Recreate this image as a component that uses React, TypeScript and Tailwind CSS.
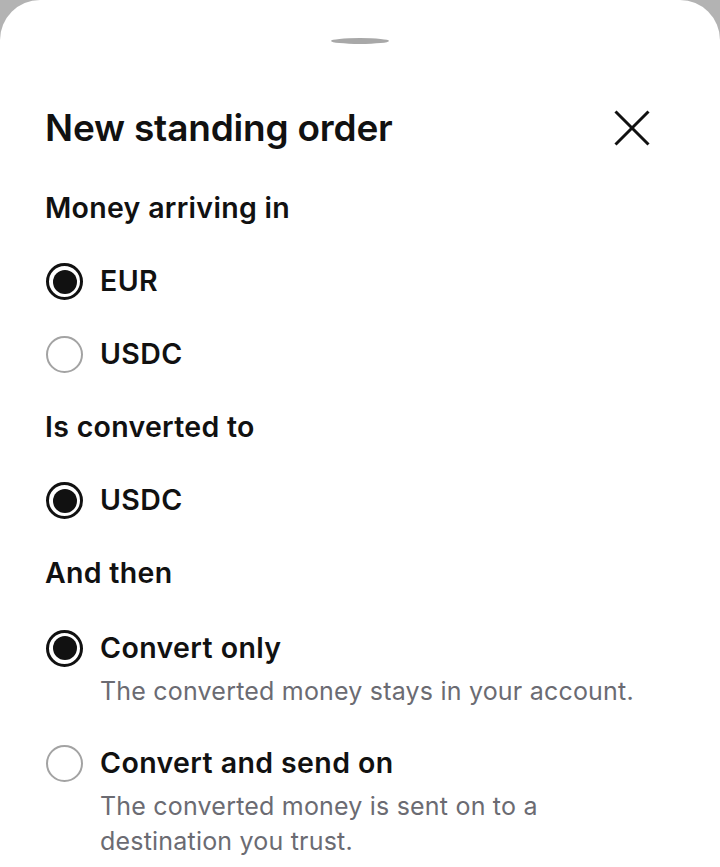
import React from 'react';

type Option = { label: string; description?: string; selected: boolean };

const sections: { title: string; options: Option[] }[] = [
  {
    title: 'Money arriving in',
    options: [
      { label: 'EUR', selected: true },
      { label: 'USDC', selected: false },
    ],
  },
  {
    title: 'Is converted to',
    options: [{ label: 'USDC', selected: true }],
  },
  {
    title: 'And then',
    options: [
      { label: 'Convert only', description: 'The converted money stays in your account.', selected: true },
      {
        label: 'Convert and send on',
        description: 'The converted money is sent on to a destination you trust.',
        selected: false,
      },
    ],
  },
];

function Radio({ selected }: { selected: boolean }) {
  if (selected) {
    return (
      <span className="flex h-[37px] w-[37px] shrink-0 items-center justify-center rounded-full border-[3px] border-[#111111]">
        <span className="h-[24px] w-[24px] rounded-full bg-[#111111]" />
      </span>
    );
  }
  return <span className="h-[37px] w-[37px] shrink-0 rounded-full border-2 border-[#a3a3a3]" />;
}

function OptionRow({ option }: { option: Option }) {
  if (!option.description) {
    return (
      <div className="flex h-[73px] items-center gap-[17px] pl-[1px]">
        <Radio selected={option.selected} />
        <span className="text-[28.5px] font-semibold tracking-[0.4px] text-[#111111]">{option.label}</span>
      </div>
    );
  }
  return (
    <div className="py-[16px]">
      <div className="flex h-[44px] items-center gap-[17px] pl-[1px]">
        <Radio selected={option.selected} />
        <span className="text-[28.5px] font-semibold tracking-[0.4px] text-[#111111]">{option.label}</span>
      </div>
      <p className="mt-[4px] pl-[55px] pr-[25px] text-[25px] leading-[35px] tracking-[0.2px] text-[#6b6b72]">
        {option.description}
      </p>
    </div>
  );
}

export default function App() {
  return (
    <div className="min-h-screen bg-[#b3b3b3]" style={{ fontFamily: 'Inter, "Noto Sans", sans-serif' }}>
      <div className="min-h-[867px] rounded-t-[40px] bg-white px-[45px] pt-[38px]">
        <div className="mx-auto h-[6px] w-[58px] rounded-[50%] bg-[#a8a8a8]" />

        <div className="mt-[56px] flex h-[56px] items-center justify-between">
          <h1 className="text-[37px] font-semibold tracking-[-0.2px] text-[#111111]">New standing order</h1>
          <button className="mr-[25px] flex h-[36px] w-[36px] items-center justify-center" aria-label="Close">
            <svg width="36" height="36" viewBox="0 0 36 36" fill="none" stroke="#111111" strokeWidth="3">
              <line x1="1.5" y1="1.5" x2="34.5" y2="34.5" />
              <line x1="34.5" y1="1.5" x2="1.5" y2="34.5" />
            </svg>
          </button>
        </div>

        <div className="mt-[16px]">
          {sections.map((section) => (
            <div key={section.title}>
              <div className="flex h-[73px] items-center">
                <h2 className="text-[28.5px] font-semibold tracking-[0.3px] text-[#111111]">{section.title}</h2>
              </div>
              {section.options.map((option) => (
                <OptionRow key={section.title + option.label} option={option} />
              ))}
            </div>
          ))}
        </div>
      </div>
    </div>
  );
}
